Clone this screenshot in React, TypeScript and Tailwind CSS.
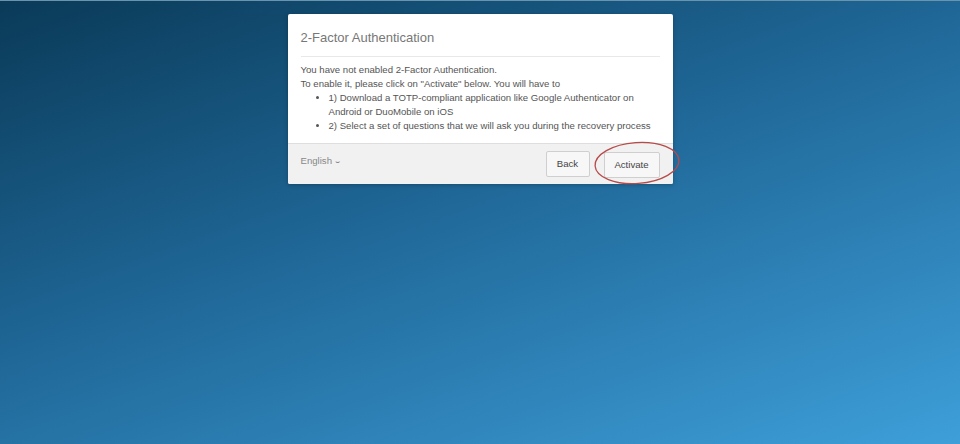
export default function App() {
  return (
    <div
      className="relative h-[444px] w-[960px] overflow-hidden bg-[linear-gradient(160deg,#0a3a58_0%,#1f6797_45%,#3e9fd9_100%)] border-t border-[#6a93ad]"
      style={{ fontFamily: '"Liberation Sans", Arial, sans-serif' }}
    >
      <div className="flex justify-center pt-[13px]">
        <div className="w-[385px] rounded-[2px] bg-white shadow-[0_1px_4px_rgba(0,0,0,0.25)]">
          <div className="px-[13px] pt-[16px]">
            <h1 className="pb-[10px] text-[13px] leading-[16px] text-[#777] border-b border-[#e8e8e8]">
              2-Factor Authentication
            </h1>
            <div className="pt-[6px] pb-[10px] text-[9.6px] leading-[14px] text-[#555]">
              <p>You have not enabled 2-Factor Authentication.</p>
              <p>To enable it, please click on "Activate" below. You will have to</p>
              <ul className="list-disc pl-[28px]">
                <li>1) Download a TOTP-compliant application like Google Authenticator on Android or DuoMobile on iOS</li>
                <li>2) Select a set of questions that we will ask you during the recovery process</li>
              </ul>
            </div>
          </div>
          <div className="flex items-start justify-between border-t border-[#dedede] bg-[#f1f1f1] px-[13px] pt-[7px] pb-[6px] rounded-b-[2px]">
            <div className="pt-[3px] text-[9.6px] leading-[14px] text-[#888]">
              English <span className="inline-block text-[8px]">&#8995;</span>
            </div>
            <div className="flex gap-[14px]">
              <button className="h-[26px] w-[44px] rounded-[2px] border border-[#cfcfcf] bg-[#f7f7f7] text-[9.6px] text-[#444]">
                Back
              </button>
              <div className="relative">
                <button className="h-[26px] w-[56px] rounded-[2px] border border-[#cfcfcf] bg-[#f7f7f7] text-[9.6px] text-[#444]">
                  Activate
                </button>
                <svg
                  className="absolute left-[-12px] top-[-12px] pointer-events-none"
                  width="92"
                  height="48"
                  viewBox="0 0 92 48"
                >
                  <ellipse cx="45" cy="24" rx="42" ry="20.5" fill="none" stroke="#b84a4a" strokeWidth="1.3" transform="rotate(-4 45 24)" />
                </svg>
              </div>
            </div>
          </div>
        </div>
      </div>
    </div>
  );
}
